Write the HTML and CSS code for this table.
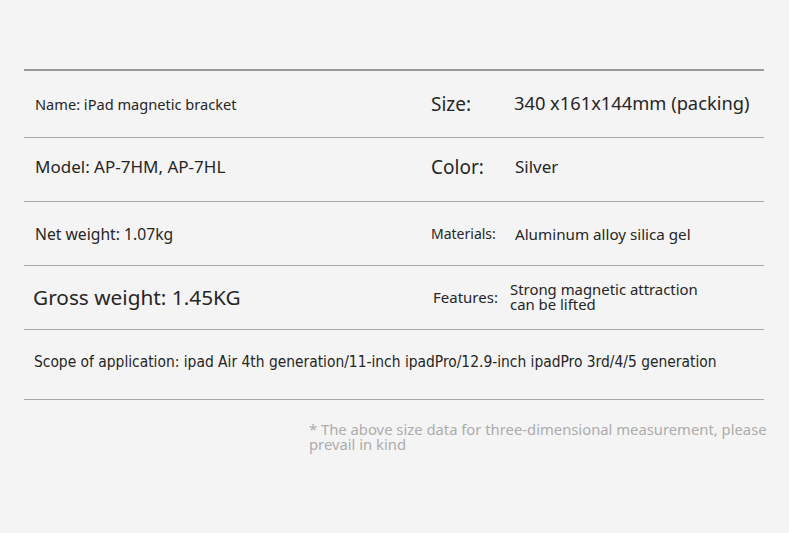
FILE: index.html
```html
<!DOCTYPE html>
<html lang="en">
<head>
<meta charset="utf-8">
<title>Specifications</title>
<link rel="stylesheet" href="styles.css">
</head>
<body>
<div class="page">
  <div class="spec">
    <div class="row r1">
      <div class="left name">Name: iPad magnetic bracket</div>
      <div class="label size">Size:</div>
      <div class="value sizev">340 x161x144mm (packing)</div>
    </div>
    <div class="row r2">
      <div class="left model">Model: AP-7HM, AP-7HL</div>
      <div class="label color">Color:</div>
      <div class="value silver">Silver</div>
    </div>
    <div class="row r3">
      <div class="left net">Net weight: 1.07kg</div>
      <div class="label materials">Materials:</div>
      <div class="value alu">Aluminum alloy silica gel</div>
    </div>
    <div class="row r4">
      <div class="left gross">Gross weight: 1.45KG</div>
      <div class="label features">Features:</div>
      <div class="value strong">Strong magnetic attraction<br>can be lifted</div>
    </div>
    <div class="row r5">
      <div class="scope">Scope of application: ipad Air 4th generation/11-inch ipadPro/12.9-inch ipadPro 3rd/4/5 generation</div>
    </div>
  </div>
  <p class="note">* The above size data for three-dimensional measurement, please<br>prevail in kind</p>
</div>
</body>
</html>
```
FILE: styles.css
```css
html, body {
  margin: 0;
  padding: 0;
  background: #f4f4f4;
}
body {
  width: 789px;
  height: 533px;
  overflow: hidden;
  font-family: "Noto Sans", "Liberation Sans", sans-serif;
  color: #262626;
}
.page {
  padding-top: 69px;
}
.spec {
  margin-left: 24px;
  width: 740px;
  border-top: 2px solid #9a9a9a;
}
.row {
  display: grid;
  grid-template-columns: 407px 83px 1fr;
  align-items: center;
  border-bottom: 1px solid #a6a6a6;
  height: 63px;
}
.r1 { height: 66px; }
.r2 { padding-bottom: 6px; height: 57px; }
.r4 { padding-bottom: 2px; height: 61px; }
.r5 {
  display: block;
  height: 69px;
}
.left {
  padding-left: 11px;
  white-space: nowrap;
}
.label, .value { white-space: nowrap; }
.name { font-size: 14.6px; }
.model { font-size: 17px; }
.net { font-size: 15.7px; }
.gross { font-size: 20.8px; padding-left: 9px; }
.size, .color { font-size: 19px; }
.sizev { font-size: 18.3px; margin-top: -3px; }
.silver { font-size: 17px; padding-left: 1px; }
.alu { font-size: 15.2px; padding-left: 1px; }
.materials { font-size: 14px; }
.features { font-size: 15px; padding-left: 2px; }
.strong {
  font-size: 14.9px;
  line-height: 15px;
  margin-left: -4px;
}
.scope {
  padding: 23px 0 0 10px;
  font-family: "DejaVu Sans Condensed", "Liberation Sans", sans-serif;
  font-size: 15.4px;
  white-space: nowrap;
}
.note {
  margin: 22px 0 0 309px;
  font-size: 14.8px;
  line-height: 15px;
  color: #acacac;
  white-space: nowrap;
}
```
